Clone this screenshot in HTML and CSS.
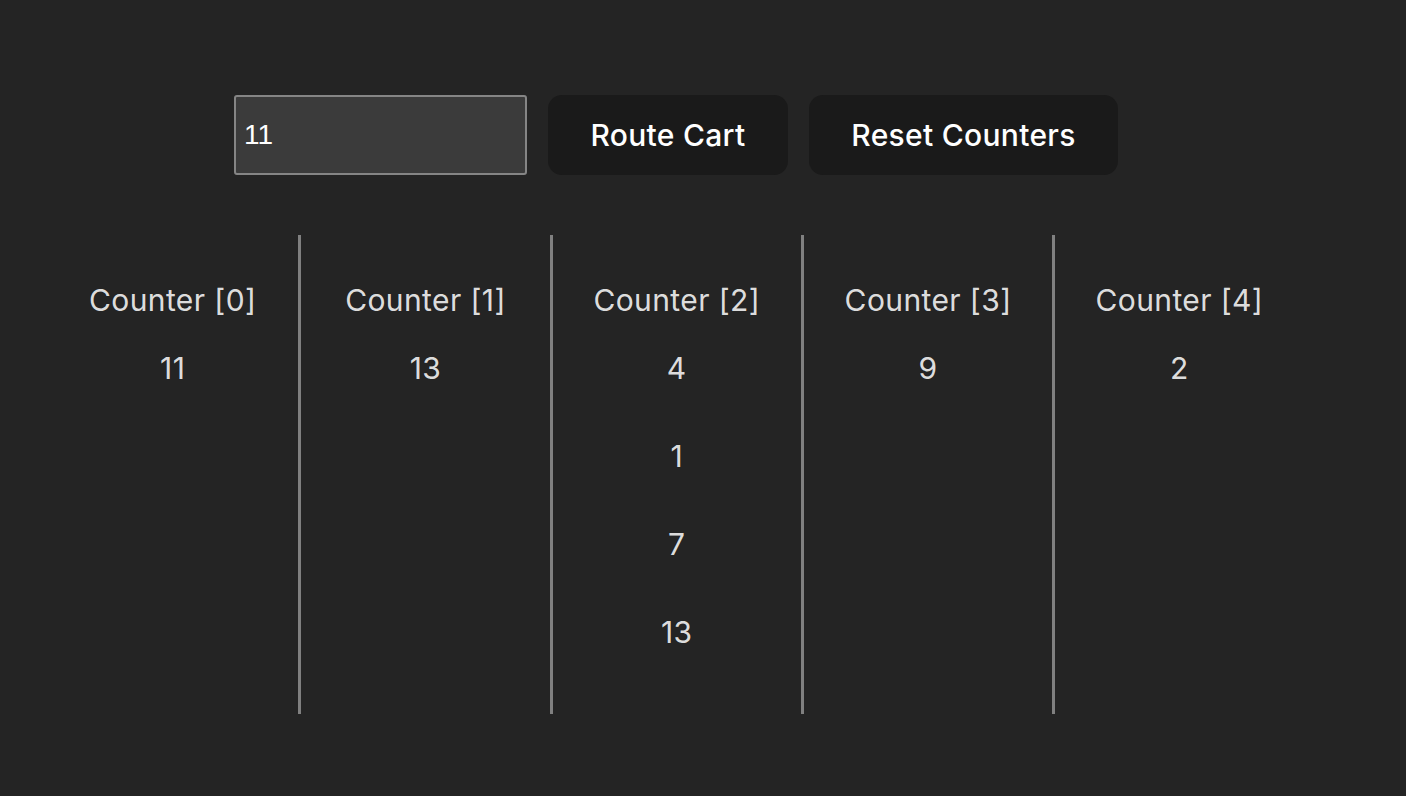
FILE: index.html
```html
<!DOCTYPE html>
<html lang="en">
<head>
<meta charset="utf-8">
<title>Counters</title>
<link rel="stylesheet" href="styles.css">
</head>
<body>
<main class="app">
  <div class="controls">
    <input class="cart-input" type="text" value="11">
    <button class="btn btn-route">Route Cart</button>
    <button class="btn btn-reset">Reset Counters</button>
  </div>
  <div class="counters">
    <div class="counter">
      <div class="counter-label">Counter [0]</div>
      <div class="counter-value">11</div>
    </div>
    <div class="counter">
      <div class="counter-label">Counter [1]</div>
      <div class="counter-value">13</div>
    </div>
    <div class="counter">
      <div class="counter-label">Counter [2]</div>
      <div class="counter-value">4</div>
      <div class="counter-value">1</div>
      <div class="counter-value">7</div>
      <div class="counter-value">13</div>
    </div>
    <div class="counter">
      <div class="counter-label">Counter [3]</div>
      <div class="counter-value">9</div>
    </div>
    <div class="counter">
      <div class="counter-label">Counter [4]</div>
      <div class="counter-value">2</div>
    </div>
  </div>
</main>
</body>
</html>
```

FILE: styles.css
```css
html, body {
  margin: 0;
  padding: 0;
  background: #242424;
}

body {
  font-family: Inter, "Noto Sans", sans-serif;
  color: rgba(255, 255, 255, 0.87);
  min-height: 796px;
}

.app {
  width: 1258px;
  margin-left: 47px;
  padding-top: 95px;
}

.controls {
  display: flex;
  justify-content: center;
  gap: 21px;
  height: 80px;
}

.cart-input {
  box-sizing: border-box;
  width: 293px;
  height: 80px;
  margin: 0;
  padding: 0 8px;
  background: #3b3b3b;
  border: 2px solid #858585;
  border-radius: 3px;
  color: #ffffff;
  font-family: "Liberation Sans", Arial, sans-serif;
  font-size: 28px;
  outline: none;
}

.btn {
  box-sizing: border-box;
  height: 80px;
  margin: 0;
  padding: 0 0 0 0;
  border: none;
  border-radius: 14px;
  background: #1a1a1a;
  color: #ffffff;
  font-family: Inter, "Noto Sans", sans-serif;
  font-size: 30px;
  font-weight: 500;
  letter-spacing: 0.3px;
  cursor: pointer;
}

.btn-route { width: 240px; }
.btn-reset { width: 309px; }

.counters {
  display: flex;
  margin-top: 60px;
  height: 479px;
}

.counter {
  box-sizing: border-box;
  width: 251.3px;
  display: flex;
  flex-direction: column;
  align-items: center;
  padding-top: 45px;
  font-size: 30px;
  letter-spacing: 0.4px;
  color: rgba(255, 255, 255, 0.87);
}

.counter + .counter {
  border-left: 3px solid #808080;
}

.counter-label {
  line-height: 40px;
  margin-bottom: 28px;
}

.counter-value {
  line-height: 40px;
  margin-bottom: 48px;
}
```
